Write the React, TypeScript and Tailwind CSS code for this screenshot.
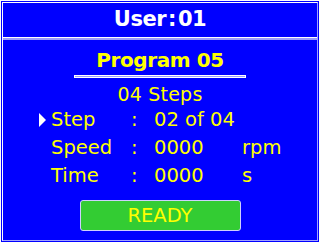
import { ReactNode } from "react";

const font = { fontFamily: '"DejaVu Sans", Verdana, sans-serif' };

function Row({
  active,
  label,
  value,
  unit,
}: {
  active?: boolean;
  label: string;
  value: string;
  unit?: string;
}) {
  return (
    <div className="grid grid-cols-[15px_80px_23px_88px_40px] items-center h-[28px] pl-[33px]">
      <div className="flex">
        {active && (
          <svg width="8" height="14" viewBox="0 0 8 14" className="ml-[3px]">
            <polygon points="0,0 7,7 0,14" fill="#ffffff" />
          </svg>
        )}
      </div>
      <span>{label}</span>
      <span>:</span>
      <span>{value}</span>
      <span>{unit}</span>
    </div>
  );
}

function Frame({ children }: { children: ReactNode }) {
  return (
    <div className="w-[320px] h-[243px] bg-[#0000ff] border border-white p-px">
      <div className="h-full border border-white border-r-[#a0a0ff] border-b-[#a0a0ff] flex flex-col">
        {children}
      </div>
    </div>
  );
}

export default function App() {
  return (
    <div style={font} className="w-[320px] h-[243px] overflow-hidden">
      <Frame>
        {/* Header */}
        <div className="h-[34px] flex items-center justify-center text-white font-bold text-[21px] tracking-[-0.5px]">
          User<span className="mx-[2px]">:</span>01
        </div>
        <div className="h-[3px] bg-[#9a9aff] border-t border-white" />

        {/* Program */}
        <div className="flex flex-col items-center text-[#ffff00]">
          <div className="mt-[7px] h-[25px] flex items-center font-bold text-[20px] tracking-[-0.4px]">
            Program 05
          </div>
          <div className="mt-[3px] w-[172px] h-[3px] bg-[#9a9aff] border border-white" />
          <div className="mt-[4px] h-[24px] flex items-center text-[19px] tracking-[0.2px]">
            04 Steps
          </div>
        </div>

        {/* Rows */}
        <div className="text-[#ffff00] text-[19.5px] leading-none">
          <Row active label="Step" value="02 of 04" />
          <Row label="Speed" value="0000" unit="rpm" />
          <Row label="Time" value="0000" unit="s" />
        </div>

        {/* Status */}
        <div className="flex justify-center mt-[10px]">
          <div className="w-[161px] h-[31px] bg-[#33cc33] border border-[#d0d0ff] rounded-[3px] flex items-center justify-center text-[#ffff00] text-[19.5px]">
            READY
          </div>
        </div>
      </Frame>
    </div>
  );
}
